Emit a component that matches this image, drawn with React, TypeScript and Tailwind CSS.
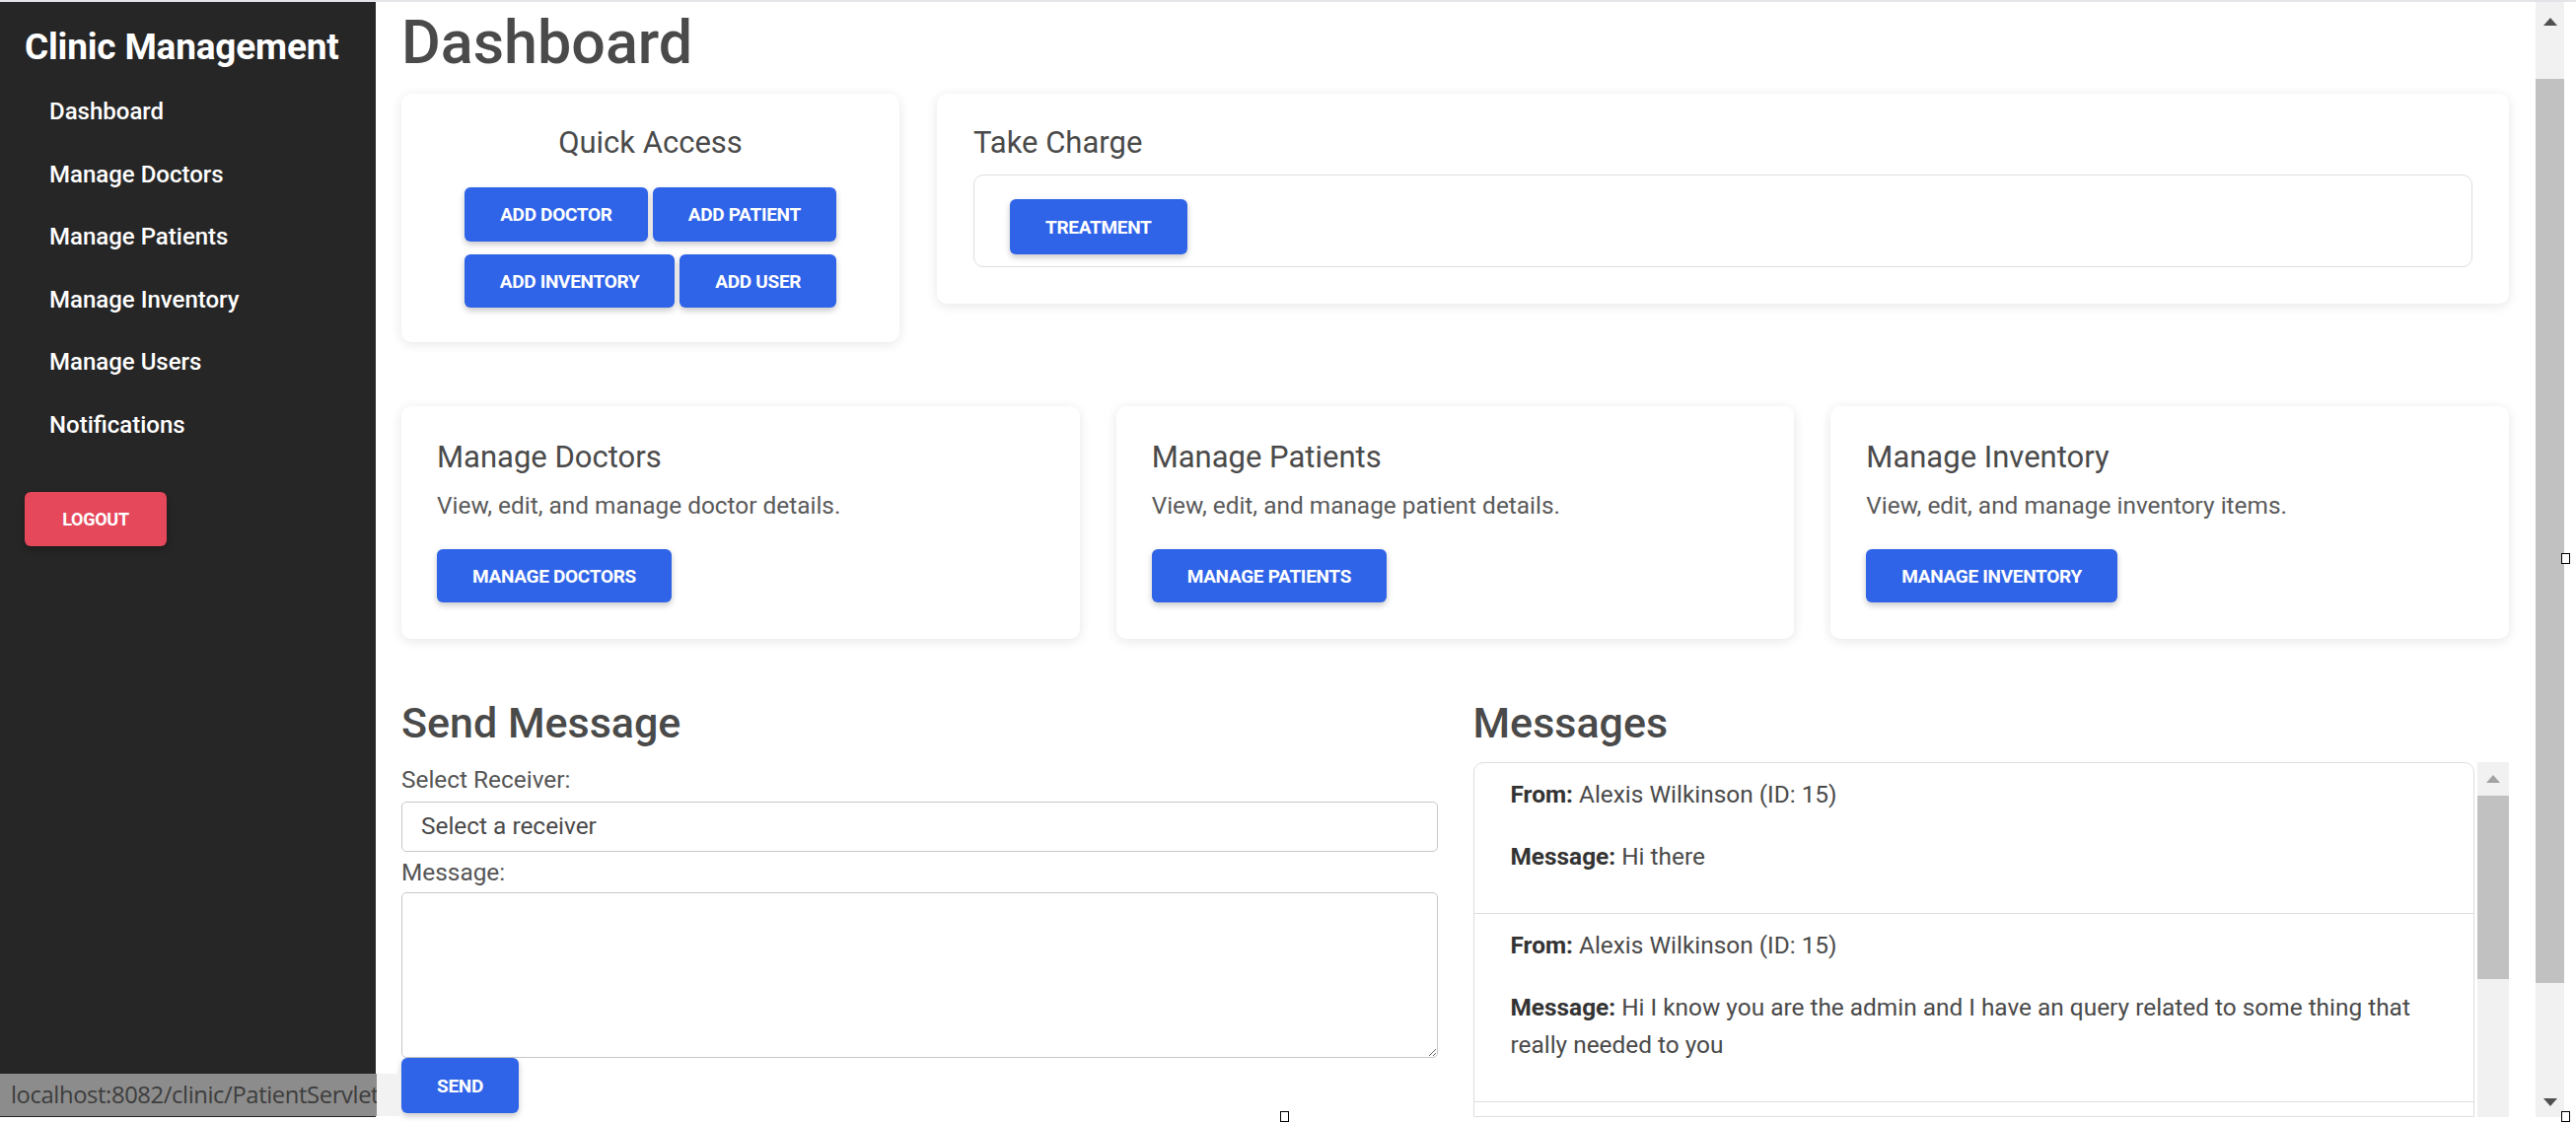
import React from "react";

type BtnProps = {
  label: string;
  h?: string;
  className?: string;
};

function Btn({ label, h = "h-[55px]", className = "" }: BtnProps) {
  return (
    <button
      className={`${h} shrink-0 rounded-[6px] bg-[#2f64e8] px-[36px] text-[19px] font-bold leading-none tracking-[-0.3px] text-white shadow-[0_3px_6px_rgba(0,0,0,0.22)] ${className}`}
    >
      {label}
    </button>
  );
}

const navItems = [
  "Dashboard",
  "Manage Doctors",
  "Manage Patients",
  "Manage Inventory",
  "Manage Users",
  "Notifications",
];

const manageCards = [
  { title: "Manage Doctors", text: "View, edit, and manage doctor details.", btn: "MANAGE DOCTORS" },
  { title: "Manage Patients", text: "View, edit, and manage patient details.", btn: "MANAGE PATIENTS" },
  { title: "Manage Inventory", text: "View, edit, and manage inventory items.", btn: "MANAGE INVENTORY" },
];

const messages = [
  { from: "Alexis Wilkinson (ID: 15)", body: "Hi there" },
  {
    from: "Alexis Wilkinson (ID: 15)",
    body: "Hi I know you are the admin and I have an query related to some thing that really needed to you",
  },
  { from: "Alexis Wilkinson (ID: 15)", body: "Hello" },
];

function Arrow({ up, color }: { up: boolean; color: string }) {
  return (
    <svg width="14" height="8" viewBox="0 0 14 8">
      <polygon points={up ? "7,0 14,8 0,8" : "0,0 14,0 7,8"} fill={color} />
    </svg>
  );
}

function Sidebar() {
  return (
    <aside className="w-[381px] shrink-0 bg-[#262626] px-[25px] pt-[24px] text-white">
      <h1 className="text-[37px] font-bold leading-[43px] tracking-[-0.2px]">Clinic Management</h1>
      <nav className="mt-[13px] flex flex-col">
        {navItems.map((n) => (
          <a key={n} className="block h-[63.5px] pl-[25px] text-[24px] font-medium leading-[63.5px]">
            {n}
          </a>
        ))}
      </nav>
      <button className="mt-[36px] h-[55px] w-[144px] rounded-[6px] bg-[#e5475b] text-[18px] font-bold tracking-[-0.3px] text-white shadow-[0_3px_6px_rgba(0,0,0,0.3)]">
        LOGOUT
      </button>
    </aside>
  );
}

function TopCards() {
  return (
    <div className="mt-[17px] flex items-start gap-[38px]">
      <div className="w-[505px] shrink-0 rounded-[10px] bg-white pb-[35px] pt-[32px] shadow-[0_2px_12px_rgba(0,0,0,0.1)]">
        <h3 className="text-center text-[31px] leading-[36px] text-[#4a4a4a]">Quick Access</h3>
        <div className="mt-[27px] flex flex-col items-center gap-[13px]">
          <div className="flex gap-[5px]">
            <Btn label="ADD DOCTOR" />
            <Btn label="ADD PATIENT" />
          </div>
          <div className="flex gap-[5px]">
            <Btn label="ADD INVENTORY" h="h-[54px]" />
            <Btn label="ADD USER" h="h-[54px]" />
          </div>
        </div>
      </div>
      <div className="flex-1 rounded-[10px] bg-white px-[37px] pb-[37px] pt-[32px] shadow-[0_2px_12px_rgba(0,0,0,0.1)]">
        <h3 className="text-[31px] leading-[36px] text-[#4a4a4a]">Take Charge</h3>
        <div className="mt-[14px] rounded-[10px] border border-[#dedede] pb-[12px] pl-[36px] pt-[24px]">
          <Btn label="TREATMENT" h="h-[56px]" />
        </div>
      </div>
    </div>
  );
}

function ManageCards() {
  return (
    <div className="mt-[65px] grid grid-cols-3 gap-[37px]">
      {manageCards.map((c) => (
        <div
          key={c.title}
          className="rounded-[10px] bg-white px-[36px] pb-[37px] pt-[34px] shadow-[0_2px_12px_rgba(0,0,0,0.1)]"
        >
          <h3 className="text-[31px] leading-[36px] text-[#4a4a4a]">{c.title}</h3>
          <p className="mt-[17px] text-[24.4px] leading-[28px] text-[#5a5a5a]">{c.text}</p>
          <div className="mt-[30px] flex">
            <Btn label={c.btn} h="h-[54px]" />
          </div>
        </div>
      ))}
    </div>
  );
}

function SendMessage() {
  return (
    <div className="flex flex-col">
      <h2 className="text-[43px] font-medium leading-[50px] text-[#4a4a4a]">Send Message</h2>
      <label className="mt-[19px] text-[24.4px] leading-[28px] text-[#555]">Select Receiver:</label>
      <select className="mt-[8px] h-[51px] appearance-none rounded-[5px] border border-[#c8c8c8] bg-white px-[19px] text-[24.4px] text-[#4a4a4a] outline-none">
        <option>Select a receiver</option>
      </select>
      <label className="mt-[7px] text-[24.4px] leading-[28px] text-[#555]">Message:</label>
      <textarea className="mt-[6px] h-[168px] rounded-[5px] border border-[#c8c8c8] bg-white outline-none" />
      <div className="flex">
        <Btn label="SEND" h="h-[56px]" />
      </div>
    </div>
  );
}

function Messages() {
  return (
    <div className="flex flex-col">
      <h2 className="text-[43px] font-medium leading-[50px] text-[#4a4a4a]">Messages</h2>
      <div className="mt-[15px] flex h-[360px] gap-[3px]">
        <div className="flex-1 overflow-hidden rounded-t-[10px] border border-[#dedede]">
          {messages.map((m, i) => (
            <div key={i} className="border-b border-[#dedede] px-[37px] pb-[38px] pt-[13px] text-[24.4px] leading-[38px] text-[#4a4a4a]">
              <p>
                <b className="font-bold text-[#333]">From:</b> {m.from}
              </p>
              <p className="mt-[25px]">
                <b className="font-bold text-[#333]">Message:</b> {m.body}
              </p>
            </div>
          ))}
        </div>
        <div className="flex w-[32px] flex-col bg-[#f1f1f1]">
          <div className="flex h-[34px] items-center justify-center">
            <Arrow up color="#a3a3a3" />
          </div>
          <div className="h-[186px] bg-[#c1c1c1]" />
        </div>
      </div>
    </div>
  );
}

export default function App() {
  return (
    <div className="relative h-[1138px] w-[2612px] overflow-hidden bg-white font-['Roboto',sans-serif]">
      <div className="h-[2px] bg-[#e4e4e8]" />
      <div className="flex h-[1131px]">
        <Sidebar />
        <main className="w-[2190px] shrink-0 pl-[26px] pr-[27px] pt-[6px]">
          <h1 className="text-[61px] font-medium leading-[70px] text-[#4a4a4a]">Dashboard</h1>
          <TopCards />
          <ManageCards />
          <div className="mt-[60px] grid grid-cols-2 gap-[36px]">
            <SendMessage />
            <Messages />
          </div>
        </main>
        <div className="flex w-[29px] shrink-0 flex-col bg-[#f1f1f1]">
          <div className="flex h-[40px] items-center justify-center">
            <Arrow up color="#505050" />
          </div>
          <div className="mt-[38px] h-[917px] bg-[#c1c1c1]" />
          <div className="flex-1" />
          <div className="flex h-[30px] items-center justify-center">
            <Arrow up={false} color="#505050" />
          </div>
        </div>
        <div className="w-[12px] shrink-0 bg-white" />
      </div>

      {/* browser status bubble */}
      <div className="absolute left-0 top-[1089px] flex h-[43px]">
        <div className="flex w-[382px] items-center overflow-hidden whitespace-nowrap bg-[#8c8c8c] pl-[11px] font-['Open_Sans',sans-serif] text-[23.8px] tracking-[-0.4px] text-[#3d3d3d]">
          localhost:8082/clinic/PatientServlet
        </div>
        <div className="w-[24px] bg-[#f2f2f2]" />
      </div>

      {/* resize handles */}
      <div className="absolute left-[2597px] top-[561px] h-[11px] w-[9px] border border-black bg-white" />
      <div className="absolute left-[2597px] top-[1127px] h-[11px] w-[9px] border border-black bg-white" />
      <div className="absolute left-[1298px] top-[1127px] h-[11px] w-[9px] border border-black bg-white" />
    </div>
  );
}
